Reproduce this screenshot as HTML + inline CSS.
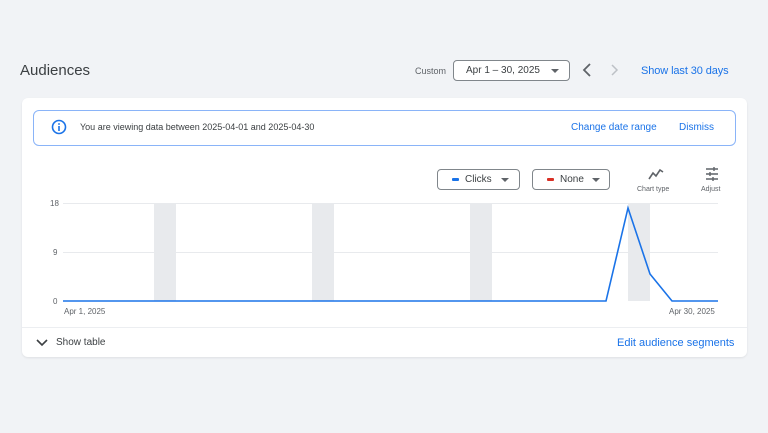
<!DOCTYPE html>
<html><head><style>
body{margin:0;width:768px;height:433px;background:#f1f3f6;font-family:"Liberation Sans",Arial,sans-serif;position:relative;overflow:hidden}
.a{position:absolute}
.blue{color:#1a73e8}
.dd{position:absolute;border:1px solid #80868b;border-radius:4px;background:#fff;font-size:10px;color:#3c4043;box-sizing:border-box}
.tri{position:absolute;width:0;height:0;border-left:4px solid transparent;border-right:4px solid transparent;border-top:4px solid #5f6368}
</style></head><body>
<div class="a" style="left:20px;top:62px;font-size:15px;color:#3c4043">Audiences</div>
<div class="a" style="left:415px;top:66px;font-size:9px;color:#5f6368">Custom</div>
<div class="dd" style="left:453px;top:60px;width:117px;height:21px"><span class="a" style="left:12px;top:4px">Apr 1 – 30, 2025</span><div class="tri" style="left:97px;top:8px"></div></div>
<svg class="a" style="left:580px;top:62px" width="40" height="16"><path d="M10 2 L4 8 L10 14" stroke="#5f6368" stroke-width="1.8" fill="none"/><path d="M32 3 L37 8 L32 13" stroke="#bdc1c6" stroke-width="1.5" fill="none"/></svg>
<div class="a blue" style="left:641px;top:65px;font-size:11px;letter-spacing:-0.1px">Show last 30 days</div>
<div class="a" style="left:22px;top:98px;width:725px;height:259px;background:#fff;border-radius:6px;box-shadow:0 1px 2px rgba(0,0,0,.08)"></div>
<div class="a" style="left:33px;top:110px;width:701px;height:34px;border:1px solid #8ab4f8;border-radius:6px"></div>
<svg class="a" style="left:51px;top:119px" width="16" height="16"><circle cx="8" cy="8" r="6.5" stroke="#1a73e8" stroke-width="1.6" fill="none"/><rect x="7.2" y="7" width="1.6" height="5" fill="#1a73e8"/><rect x="7.2" y="4.2" width="1.6" height="1.6" fill="#1a73e8"/></svg>
<div class="a" style="left:80px;top:122px;font-size:9px;color:#3c4043">You are viewing data between 2025-04-01 and 2025-04-30</div>
<div class="a blue" style="left:571px;top:122px;font-size:10px">Change date range</div>
<div class="a blue" style="left:679px;top:122px;font-size:10px">Dismiss</div>
<div class="dd" style="left:437px;top:169px;width:83px;height:21px"><span class="a" style="left:14px;top:8px;width:7px;height:3px;background:#1a73e8;border-radius:1px"></span><span class="a" style="left:27px;top:4px">Clicks</span><div class="tri" style="left:63px;top:8px"></div></div>
<div class="dd" style="left:532px;top:169px;width:78px;height:21px"><span class="a" style="left:14px;top:8px;width:7px;height:3px;background:#d93025;border-radius:1px"></span><span class="a" style="left:27px;top:4px">None</span><div class="tri" style="left:59px;top:8px"></div></div>
<svg class="a" style="left:647px;top:167px" width="18" height="14"><path d="M2 12 L6 6 L9 9 L13 3 L16 5" stroke="#5f6368" stroke-width="1.6" fill="none"/></svg>
<div class="a" style="left:637px;top:186px;font-size:7px;color:#5f6368">Chart type</div>
<svg class="a" style="left:704px;top:166px" width="16" height="16" stroke="#5f6368" stroke-width="1.4"><path d="M2 3H14M2 8H14M2 13H14"/><path d="M10 1V5M6 6V10M9 11V15"/></svg>
<div class="a" style="left:701px;top:186px;font-size:7px;color:#5f6368">Adjust</div>
<svg class="a" style="left:0;top:0" width="768" height="433">
<g fill="#e8eaed"><rect x="154" y="203" width="22" height="98"/><rect x="312" y="203" width="22" height="98"/><rect x="470" y="203" width="22" height="98"/><rect x="628" y="203" width="22" height="98"/></g>
<g stroke="#e8eaed" stroke-width="1"><line x1="63" y1="203.5" x2="718" y2="203.5"/><line x1="63" y1="252.5" x2="718" y2="252.5"/></g>
<g font-size="8" fill="#5f6368" font-family="Liberation Sans"><text x="50" y="206">18</text><text x="53" y="255">9</text><text x="53" y="304">0</text><text x="64" y="314">Apr 1, 2025</text><text x="669" y="314">Apr 30, 2025</text></g>
<polyline points="63,301 606,301 628,208 650,274 672,301 718,301" fill="none" stroke="#1a73e8" stroke-width="1.6"/>
<line x1="22" y1="327.5" x2="747" y2="327.5" stroke="#eceef1"/>
<path d="M37 340 L42 345 L47 340" stroke="#3c4043" stroke-width="1.6" fill="none"/>
</svg>
<div class="a" style="left:56px;top:337px;font-size:10px;color:#3c4043">Show table</div>
<div class="a blue" style="left:617px;top:337px;font-size:11px">Edit audience segments</div>
</body></html>
